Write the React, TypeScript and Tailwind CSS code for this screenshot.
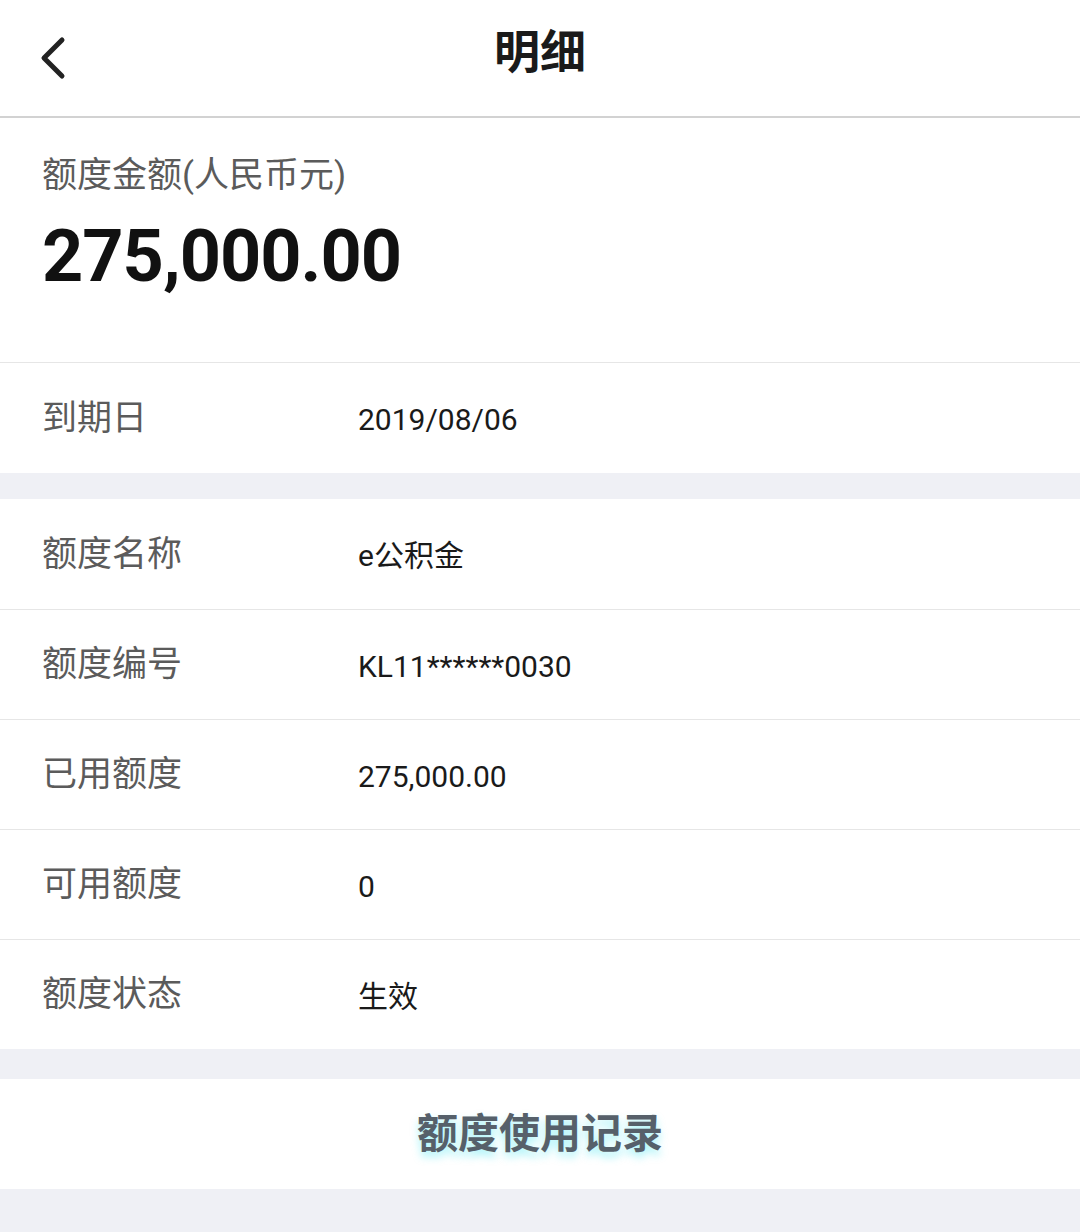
import React from "react";

const rows1 = [
  { label: "额度名称", value: "e公积金" },
  { label: "额度编号", value: "KL11******0030" },
  { label: "已用额度", value: "275,000.00" },
  { label: "可用额度", value: "0" },
  { label: "额度状态", value: "生效" },
];

function Row({ label, value, border }: { label: string; value: string; border?: boolean }) {
  return (
    <div
      className={
        "flex h-[110px] items-center bg-white " + (border ? "border-t border-[#e6e6e6]" : "")
      }
    >
      <div className="w-[358px] pl-[42px] text-[35px] leading-none text-[#5b5b5b]">{label}</div>
      <div className="pt-[4px] text-[30px] leading-none text-[#1a1a1a]">{value}</div>
    </div>
  );
}

export default function App() {
  return (
    <div
      className="flex h-[1232px] w-[1080px] flex-col bg-[#eff0f5]"
      style={{ fontFamily: 'Roboto, "Noto Sans CJK SC", sans-serif' }}
    >
      <div className="relative flex h-[118px] items-center justify-center border-b-2 border-[#d2d2d2] bg-white">
        <svg
          className="absolute left-[36px] top-[36px]"
          width="32"
          height="44"
          viewBox="0 0 32 44"
          fill="none"
        >
          <path d="M26 4 L8 22 L26 40" stroke="#222" strokeWidth="5" strokeLinecap="round" strokeLinejoin="round" />
        </svg>
        <div className="pb-[12px] text-[46px] font-bold leading-none text-[#1a1a1a]">明细</div>
      </div>

      <div className="flex h-[244px] flex-col bg-white pl-[42px] pt-[40px]">
        <div className="text-[35px] leading-none text-[#5b5b5b]">额度金额(人民币元)</div>
        <div className="mt-[28px] text-[72px] font-bold leading-none tracking-[-1px] text-[#111]">
          275,000.00
        </div>
      </div>

      <div className="border-t border-[#e6e6e6]">
        <Row label="到期日" value="2019/08/06" />
      </div>

      <div className="mt-[26px]">
        {rows1.map((r, i) => (
          <Row key={r.label} label={r.label} value={r.value} border={i > 0} />
        ))}
      </div>

      <div className="mt-[30px] flex h-[110px] items-center justify-center bg-white">
        <div className="text-[41px] font-bold leading-none text-[#56606a] [text-shadow:0_5px_8px_rgba(0,220,235,0.35)]">
          额度使用记录
        </div>
      </div>
    </div>
  );
}
